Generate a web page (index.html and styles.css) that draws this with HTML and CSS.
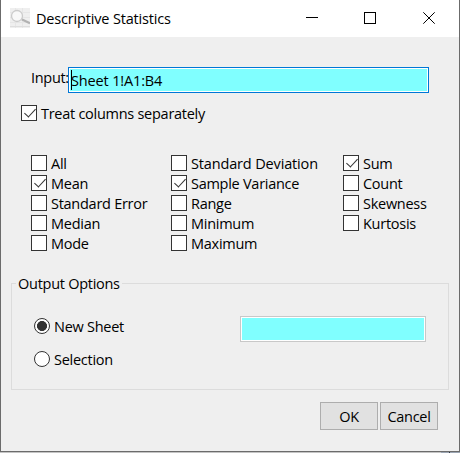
FILE: index.html
```html
<!DOCTYPE html>
<html lang="en">
<head>
<meta charset="utf-8">
<title>Descriptive Statistics</title>
<link rel="stylesheet" href="styles.css">
</head>
<body>
<div class="window">
  <header class="titlebar">
    <svg class="app-icon" width="20" height="20" viewBox="0 0 20 20">
      <rect width="20" height="20" fill="#efefef"/>
      <path d="M0 4.500H20M0 9.500H20M0 14.500H20M5.500 0V20M12.500 0V20" stroke="#e6e6e6" fill="none"/>
      <path d="M0 18.500H20" stroke="#dedede"/>
      <circle cx="7" cy="8" r="5.500" fill="#f8f8f8" stroke="#cbcbcb" stroke-width="1.300"/>
      <path d="M12 11.500L20 15.300" stroke="#b2b2b2" stroke-width="2.200"/>
    </svg>
    <h1 class="title">Descriptive Statistics</h1>
    <svg class="controls" width="130" height="12" viewBox="0 0 130 12" fill="none" stroke="#000">
      <path d="M0 5.500H12"/>
      <rect x="58.500" y="0.500" width="11" height="11"/>
      <path d="M117.300 0.300L128.700 11.700M128.700 0.300L117.300 11.700"/>
    </svg>
  </header>
  <main class="content">
    <div class="input-row">
      <label class="input-label">Input:</label>
      <div class="field focused"><i class="caret"></i><span class="value">Sheet 1!A1:B4</span></div>
    </div>
    <div class="option separate"><i class="box checked"></i><span>Treat columns separately</span></div>
    <div class="stats">
      <div class="column">
        <div class="option"><i class="box"></i><span>All</span></div>
        <div class="option"><i class="box checked"></i><span>Mean</span></div>
        <div class="option"><i class="box"></i><span>Standard Error</span></div>
        <div class="option"><i class="box"></i><span>Median</span></div>
        <div class="option"><i class="box"></i><span>Mode</span></div>
      </div>
      <div class="column">
        <div class="option"><i class="box"></i><span class="wide">Standard Deviation</span></div>
        <div class="option"><i class="box checked"></i><span>Sample Variance</span></div>
        <div class="option"><i class="box"></i><span>Range</span></div>
        <div class="option"><i class="box"></i><span>Minimum</span></div>
        <div class="option"><i class="box"></i><span>Maximum</span></div>
      </div>
      <div class="column">
        <div class="option"><i class="box checked"></i><span>Sum</span></div>
        <div class="option"><i class="box"></i><span>Count</span></div>
        <div class="option"><i class="box"></i><span>Skewness</span></div>
        <div class="option"><i class="box"></i><span>Kurtosis</span></div>
      </div>
    </div>
    <fieldset class="output">
      <legend>Output Options</legend>
      <div class="output-body">
        <div class="radios">
          <div class="option"><i class="radio selected"></i><span>New Sheet</span></div>
          <div class="option"><i class="radio"></i><span>Selection</span></div>
        </div>
        <div class="field target"></div>
      </div>
    </fieldset>
    <div class="actions">
      <button class="button">OK</button>
      <button class="button">Cancel</button>
    </div>
  </main>
</div>
<div class="behind"></div>
</body>
</html>
```
FILE: styles.css
```css
* { box-sizing: border-box; }
body {
  margin: 0;
  width: 460px;
  height: 453px;
  overflow: hidden;
  background: #c4c4c4;
  color: #000;
  font: 14.5px/20px "Open Sans", "Noto Sans", sans-serif;
  letter-spacing: -0.27px;
  white-space: nowrap;
}
.window {
  height: 452px;
  border: solid #6b6b6b;
  border-width: 0 1px 1px;
  background: #efefef;
}
.titlebar {
  display: flex;
  align-items: center;
  height: 37px;
  padding: 0 23px 1px 9px;
  background: #fff;
}
.app-icon { margin-right: 6px; }
.title { margin: 0; padding-top: 2px; font: inherit; letter-spacing: -0.17px; }
.controls { margin-left: auto; }
.content { display: flex; flex-direction: column; }
.input-row { display: flex; margin: 30px 0 0 30px; }
.input-label { width: 37px; padding-top: 1px; letter-spacing: -0.3px; }
.field {
  display: flex;
  align-items: center;
  width: 361px;
  height: 26px;
  border: 1px solid #c8c8c8;
  background: #80ffff;
  box-shadow: inset 0 0 0 1px #fff;
}
.focused { padding-left: 2px; border-color: #0078d7; }
.value { padding-top: 2px; letter-spacing: -0.15px; }
.caret { width: 1px; height: 20px; margin-right: -1px; background: #000; }
.option { display: flex; align-items: center; gap: 4px; height: 20px; }
.option span { padding-top: 2px; }
.option .wide { letter-spacing: -0.15px; }
.separate { margin: 10px 0 0 20px; }
.box, .radio {
  flex: none;
  width: 16px;
  height: 16px;
  border: 1px solid #333;
  background: #fff;
}
.checked::after {
  content: "";
  display: block;
  width: 5px;
  height: 10px;
  margin: 0 0 0 5px;
  border: solid #333;
  border-width: 0 1.5px 1.5px 0;
  transform: rotate(43deg);
}
.stats { display: flex; height: 100px; margin: 30px 0 0 30px; }
.column { flex: none; width: 140px; }
.column:nth-child(2) { width: 172px; }
.column:nth-child(3) { width: 100px; }
.output {
  width: 438px;
  height: 117px;
  margin: 20px 10px 0;
  padding: 0;
  border: 1px solid #dcdcdc;
}
.output legend { height: 20px; margin-left: 4px; padding: 1px 2px 0; }
.output-body { display: flex; padding: 23px 0 0 22px; }
.radios { display: flex; flex-direction: column; gap: 13px; width: 206px; }
.radio { border-radius: 50%; }
.selected { background: radial-gradient(circle, #333 0 4.7px, #fff 5.3px); }
.target { width: 186px; }
.actions { display: flex; gap: 2px; justify-content: flex-end; margin: 12px 21px 0 0; }
.button {
  width: 58px;
  height: 28px;
  padding: 2px 0 0;
  border: 1px solid #adadad;
  background: #e1e1e1;
  color: #000;
  font: inherit;
  letter-spacing: inherit;
}
.behind {
  width: 26px;
  height: 1px;
  margin-left: 441px;
  background: linear-gradient(90deg, #9ba5b3 8px, #303744 8px 9px, #9ba5b3 9px);
}
```
